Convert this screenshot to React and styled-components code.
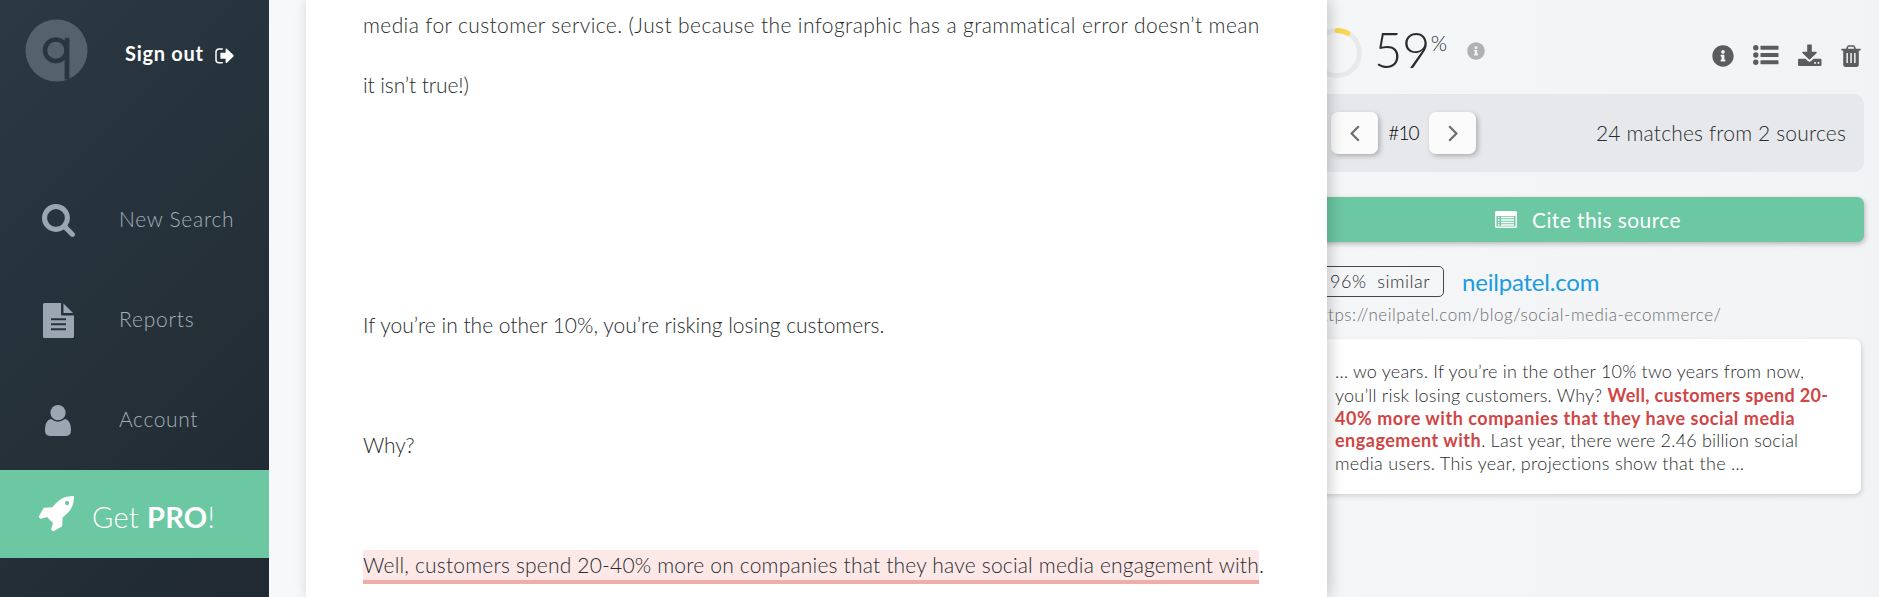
import styled, { createGlobalStyle } from "styled-components";
import { FaInfoCircle } from "react-icons/fa";

const paragraphs = [
  {
    lines: [
      {
        text: "media for customer service. (Just because the infographic has a grammatical error doesn’t mean",
        spacing: 0.39,
      },
      { text: "it isn’t true!)", spacing: -0.1 },
    ],
    after: 180,
  },
  {
    lines: [
      {
        text: "If you’re in the other 10%, you’re risking losing customers.",
        spacing: 0,
      },
    ],
    after: 60,
  },
  { lines: [{ text: "Why?", spacing: -0.2 }], after: 60 },
];

function Logo() {
  return (
    <svg width="63" height="63" viewBox="0 0 63 63">
      <circle cx="31.5" cy="31.5" r="31" fill="#56626b" />
      <circle cx="30.8" cy="31.3" r="10.8" fill="none" stroke="#29363f" strokeWidth="4.6" />
      <path d="M42 20.800V60.500" stroke="#29363f" strokeWidth="4.8" />
      <circle cx="42" cy="21" r="2.400" fill="#29363f" />
    </svg>
  );
}

function SignOutIcon() {
  return (
    <svg width="19" height="16" viewBox="0 0 19 16">
      <path
        d="M7.800 1H4A3 3 0 0 0 1 4v7.800a3 3 0 0 0 3 3h3.800"
        fill="none"
        stroke="#fff"
        strokeWidth="1.500"
      />
      <path
        d="M5.4 4.800h5.200V1.500c0-.9.800-1.200 1.400-.6l6.400 6.200q.6.700 0 1.300L12 14.700c-.6.600-1.400.3-1.400-.6v-3.300H5.4z"
        fill="#fff"
      />
    </svg>
  );
}

function SearchIcon() {
  return (
    <svg width="33" height="33" viewBox="64 128 1664 1664">
      <path
        fill="currentColor"
        d="M1216 832q0-185-131.5-316.5t-316.5-131.5-316.5 131.5-131.5 316.5 131.5 316.5 316.5 131.5 316.5-131.5 131.5-316.5zm512 832q0 52-38 90t-90 38q-54 0-90-38l-343-342q-179 124-399 124-143 0-273.5-55.5t-225-150-150-225-55.5-273.5 55.5-273.5 150-225 225-150 273.5-55.5 273.5 55.5 225 150 150 225 55.5 273.5q0 220-124 399l343 343q37 37 37 90z"
      />
    </svg>
  );
}

function ReportIcon() {
  return (
    <svg width="31" height="35" viewBox="0 0 31 35">
      <path
        fill="currentColor"
        fillRule="evenodd"
        d="M1.5 0H18v11.2q0 1.3 1.3 1.3H31v21q0 1.5-1.5 1.5h-28Q0 35 0 33.500v-32Q0 0 1.500 0zM8 15.200v2h15v-2zm0 5v2h15v-2zm0 5v2h15v-2z"
      />
      <path fill="currentColor" d="M20.5.5 30 10H20.500z" />
    </svg>
  );
}

function UserIcon() {
  return (
    <svg width="26" height="31" viewBox="0 0 26 31">
      <circle cx="13" cy="7.700" r="7.600" fill="currentColor" />
      <path
        fill="currentColor"
        d="M6.200 14Q13 19.300 19.800 14C24.500 14.500 26 20 26 25.600Q26 31 21 31H5Q0 31 0 25.600C0 20 1.500 14.500 6.200 14z"
      />
    </svg>
  );
}

function RocketIcon() {
  return (
    <svg width="36" height="36" viewBox="0 128 1664 1664">
      <path
        fill="currentColor"
        d="M1440 448q0-40-28-68t-68-28-68 28-28 68 28 68 68 28 68-28 28-68zm224-288q0 249-75.5 430.5t-253.5 360.5q-81 80-195 176l-20 379q-2 16-16 26l-384 224q-7 4-16 4-12 0-23-9l-64-64q-13-14-8-32l85-276-281-281-276 85q-3 1-9 1-14 0-23-9l-64-64q-17-19-5-39l224-384q10-14 26-16l379-20q96-114 176-195 188-187 358-258t431-71q14 0 24 9.5t10 22.5z"
      />
    </svg>
  );
}

function ListIcon() {
  return (
    <svg width="26" height="20" viewBox="0 0 26 20">
      {[2.8, 10, 17.2].map((y) => (
        <g key={y} fill="currentColor">
          <circle cx="2.800" cy={y} r="2.700" />
          <rect x="7.500" y={y - 2} width="18" height="4" rx="0.500" />
        </g>
      ))}
    </svg>
  );
}

function DownloadIcon() {
  return (
    <svg width="24" height="22" viewBox="0 0 24 22">
      <path
        fill="currentColor"
        d="M9.200.5h4.600v7.200h4.400q1 .3.400 1.200l-6.400 6.300q-.700.600-1.400 0L4.400 8.900q-.600-.900.400-1.200h4.400z"
      />
      <path
        fill="currentColor"
        fillRule="evenodd"
        d="M1.300 14.700h6.200l2.300 2.200q1.700 1.500 3.400 0l2.300-2.200h6.700q1.300 0 1.300 1.300v4.700q0 1.300-1.300 1.300H1.300Q0 22 0 20.700V16q0-1.300 1.300-1.300zM16.200 18v1.700h1.700V18zm3.400 0v1.700h1.700V18z"
      />
    </svg>
  );
}

function TrashIcon() {
  return (
    <svg width="20" height="22" viewBox="0 0 20 22">
      <path
        d="M.3 4.600h19.400M5.700 4.200l1-2.400q.300-.800 1.200-.800h4.200q.900 0 1.200.800l1 2.400"
        fill="none"
        stroke="currentColor"
        strokeWidth="1.600"
      />
      <path
        fill="currentColor"
        fillRule="evenodd"
        d="M2.200 5h15.600v14.300Q17.800 22 15.500 22h-11Q2.200 22 2.200 19.300zM5.400 8v10h1.500V8zm3.900 0v10h1.500V8zm3.800 0v10h1.500V8z"
      />
    </svg>
  );
}

function CiteIcon() {
  return (
    <svg width="22" height="17" viewBox="0 0 22 17">
      <path
        fill="currentColor"
        fillRule="evenodd"
        d="M1.500 0h19Q22 0 22 1.500v14q0 1.500-1.500 1.500h-19Q0 17 0 15.500v-14Q0 0 1.500 0zM1.500 5v10.500h19V5z"
      />
      <path
        d="M3 6.500h1.500M6 6.500h13M3 9h1.500M6 9h13M3 11.500h1.500M6 11.500h13M3 14h1.500M6 14h13"
        stroke="currentColor"
        strokeWidth="1.500"
      />
    </svg>
  );
}

function Chevron({ next }) {
  return (
    <svg width="10" height="17" viewBox="0 0 10 17">
      <path
        d={next ? "M1.200 1.200 8.400 8.500 1.200 15.800" : "M8.800 1.200 1.600 8.500 8.800 15.800"}
        fill="none"
        stroke="#6b6e70"
        strokeWidth="2.200"
      />
    </svg>
  );
}

export default function App() {
  return (
    <>
      <GlobalStyle />
      <Page>
        <Sidebar>
          <SidebarTop>
            <Logo />
            <SignOut>
              <span>Sign out</span>
              <SignOutIcon />
            </SignOut>
          </SidebarTop>
          <Nav>
            <NavItem $spacing={0.7}>
              <NavIcon>
                <SearchIcon />
              </NavIcon>
              <NavLabel>New Search</NavLabel>
            </NavItem>
            <NavItem $spacing={0.8}>
              <NavIcon>
                <ReportIcon />
              </NavIcon>
              <NavLabel>Reports</NavLabel>
            </NavItem>
            <NavItem $spacing={0.6}>
              <NavIcon>
                <UserIcon />
              </NavIcon>
              <NavLabel>Account</NavLabel>
            </NavItem>
          </Nav>
          <ProButton>
            <RocketIcon />
            <span>
              Get <b>PRO</b>!
            </span>
          </ProButton>
        </Sidebar>

        <Document>
          {paragraphs.map((paragraph) => (
            <Paragraph key={paragraph.lines[0].text} $after={paragraph.after}>
              {paragraph.lines.map((line) => (
                <Line key={line.text} $spacing={line.spacing}>
                  {line.text}
                </Line>
              ))}
            </Paragraph>
          ))}
          <Paragraph $after={0}>
            <Line $spacing={0.19}>
              <Highlight>
                Well, customers spend 20-40% more on companies that they have
                social media engagement with
              </Highlight>
              .
            </Line>
          </Paragraph>
        </Document>

        <Panel>
          <ScoreRow>
            <svg width="50" height="50" viewBox="0 0 50 50">
              <circle cx="25" cy="25" r="22.500" fill="none" stroke="#e8e9eb" strokeWidth="5" />
              <path
                d="M25 2.500A22.500 22.500 0 0 1 35.800 5.200"
                fill="none"
                stroke="#fbd54c"
                strokeWidth="5"
                strokeLinecap="round"
              />
            </svg>
            <Score>59</Score>
            <Percent>%</Percent>
            <ScoreInfo size={18} />
            <Tools>
              <FaInfoCircle size={22} />
              <ListIcon />
              <DownloadIcon />
              <TrashIcon />
            </Tools>
          </ScoreRow>
          <MatchBar>
            <PageButton>
              <Chevron />
            </PageButton>
            <MatchNumber>#10</MatchNumber>
            <PageButton>
              <Chevron next />
            </PageButton>
            <MatchTotal>24 matches from 2 sources</MatchTotal>
          </MatchBar>
          <CiteButton>
            <CiteIcon />
            <span>Cite this source</span>
          </CiteButton>
          <SourceRow>
            <Similar>96%&nbsp; similar</Similar>
            <SourceName>neilpatel.com</SourceName>
          </SourceRow>
          <SourceUrl>https://neilpatel.com/blog/social-media-ecommerce/</SourceUrl>
          <Snippet>
            <SnippetLine $height={24}>
              <Text $spacing={0.22}>
                … wo years. If you’re in the other 10% two years from now,
              </Text>
            </SnippetLine>
            <SnippetLine $height={23}>
              <Text $spacing={0.22}>you’ll risk losing customers. Why? </Text>
              <Match $spacing={0.34}>Well, customers spend 20-</Match>
            </SnippetLine>
            <SnippetLine $height={22}>
              <Match $spacing={0.54}>
                40% more with companies that they have social media
              </Match>
            </SnippetLine>
            <SnippetLine $height={23}>
              <Match $spacing={0.5}>engagement with</Match>
              <Text $spacing={0.19}>
                . Last year, there were 2.46 billion social
              </Text>
            </SnippetLine>
            <SnippetLine $height={24}>
              <Text $spacing={0.31}>
                media users. This year, projections show that the …
              </Text>
            </SnippetLine>
          </Snippet>
        </Panel>
      </Page>
    </>
  );
}

const GlobalStyle = createGlobalStyle`
  * {
    box-sizing: border-box;
  }
  body {
    margin: 0;
    font-family: Lato, "Open Sans", sans-serif;
    font-weight: 300;
    color: #2a2c2e;
    overflow: hidden;
  }
  svg {
    display: block;
    flex: none;
  }
`;
const Page = styled.div`
  display: flex;
  width: 1879px;
  height: 597px;
  overflow: hidden;
  background-color: #f7f8fa;
`;
const Sidebar = styled.aside`
  flex: none;
  width: 269px;
  background: linear-gradient(135deg, #2b3942 0%, #202931 100%);
`;
const SidebarTop = styled.div`
  display: flex;
  align-items: flex-start;
  height: 170px;
  padding: 19px 0 0 25px;
`;
const SignOut = styled.a`
  display: flex;
  align-items: center;
  gap: 11px;
  margin: 19px 0 0 37px;
  font-size: 20px;
  line-height: 30px;
  font-weight: 700;
  letter-spacing: 0.7px;
  color: #fff;
  white-space: nowrap;

  svg {
    margin-top: 5px;
  }
`;
const Nav = styled.nav`
  display: flex;
  flex-direction: column;
`;
const NavItem = styled.a`
  display: flex;
  align-items: center;
  height: 100px;
  padding-left: 28px;
  font-size: 21px;
  letter-spacing: ${(props) => props.$spacing}px;
  color: #a3b0ba;
`;
const NavIcon = styled.span`
  display: flex;
  justify-content: center;
  width: 60px;
  margin-right: 31px;
  color: #9ba6b2;
`;
const NavLabel = styled.span`
  padding-bottom: 3px;
`;
const ProButton = styled.a`
  display: flex;
  align-items: center;
  gap: 18px;
  height: 88px;
  padding-left: 38px;
  background-color: #6cc7a3;
  font-size: 29px;
  letter-spacing: 0.25px;
  color: #fff;

  span {
    padding-top: 5px;
  }
  b {
    font-weight: 700;
  }
`;
const Document = styled.main`
  position: relative;
  z-index: 1;
  flex: none;
  width: 1021px;
  margin-left: 37px;
  padding-left: 57px;
  background-color: #fff;
  box-shadow: 3px 0 14px rgba(0, 0, 0, 0.2);
`;
const Paragraph = styled.p`
  margin: 0 0 ${(props) => props.$after}px;

  &:first-child {
    margin-top: -5px;
  }
`;
const Line = styled.span`
  display: block;
  font-size: 21px;
  line-height: 60px;
  letter-spacing: ${(props) => props.$spacing}px;
  white-space: nowrap;
`;
const Highlight = styled.mark`
  padding: 2px 0 3px;
  border-bottom: 4px solid #efaca8;
  border-radius: 2px 2px 0 0;
  background-color: #fde8e8;
  color: inherit;
`;
const Panel = styled.section`
  flex: none;
  width: 567px;
  margin-left: -15px;
  padding-right: 15px;
  background: linear-gradient(90deg, #f5f6f8, #f1f3f5);
`;
const ScoreRow = styled.div`
  display: flex;
  align-items: center;
  height: 94px;
  padding: 11px 3px 0 0;
`;
const Score = styled.span`
  margin: -7px 0 0 12px;
  font-size: 49px;
  line-height: 60px;
  letter-spacing: -0.5px;
`;
const Percent = styled.span`
  margin: -21px 20px 0 1px;
  font-size: 21px;
`;
const ScoreInfo = styled(FaInfoCircle)`
  margin-top: -4px;
  color: #b1b1b1;
`;
const Tools = styled.div`
  display: flex;
  align-items: center;
  gap: 19px;
  margin: 4px 0 0 auto;
  color: #5b5c5e;

  svg:first-child {
    margin-top: 2px;
  }
  svg:last-child {
    margin-top: 2px;
  }
`;
const MatchBar = styled.div`
  display: flex;
  align-items: center;
  height: 78px;
  padding: 0 18px 0 19px;
  border-radius: 0 10px 10px 0;
  background-color: #e7e8ec;
`;
const PageButton = styled.button`
  display: flex;
  align-items: center;
  justify-content: center;
  width: 47px;
  height: 42px;
  padding: 0;
  border: 0;
  border-radius: 7px;
  background-color: #fbfbfb;
  box-shadow: 2px 2px 5px rgba(0, 0, 0, 0.25);
`;
const MatchNumber = styled.span`
  width: 51px;
  padding-bottom: 1px;
  text-align: center;
  font-size: 19px;
  letter-spacing: -0.8px;
  color: #000;
`;
const MatchTotal = styled.span`
  margin-left: auto;
  padding-bottom: 2px;
  font-size: 21px;
  letter-spacing: 0.16px;
`;
const CiteButton = styled.button`
  display: flex;
  align-items: center;
  justify-content: center;
  gap: 15px;
  width: 100%;
  height: 45px;
  margin-top: 25px;
  padding: 0;
  border: 0;
  border-radius: 0 7px 7px 0;
  background-color: #6cc7a3;
  box-shadow: 1px 2px 5px rgba(0, 0, 0, 0.25);
  font-family: inherit;
  font-size: 21px;
  letter-spacing: 0.4px;
  color: #fff;
`;
const SourceRow = styled.div`
  display: flex;
  align-items: center;
  height: 31px;
  margin-top: 24px;
`;
const Similar = styled.span`
  width: 132px;
  height: 31px;
  padding-right: 13px;
  border: 1px solid #46484a;
  border-radius: 5px;
  text-align: right;
  font-size: 18px;
  line-height: 29px;
  letter-spacing: 0.5px;
  white-space: nowrap;
`;
const SourceName = styled.a`
  margin-left: 18px;
  padding-bottom: 1px;
  font-size: 24px;
  font-weight: 400;
  letter-spacing: -0.2px;
  color: #1b9be0;
`;
const SourceUrl = styled.div`
  height: 42px;
  font-size: 17px;
  line-height: 36px;
  letter-spacing: 0.52px;
  color: #6c6e70;
`;
const Snippet = styled.div`
  width: 549px;
  height: 155px;
  padding: 21px 0 0 23px;
  border-radius: 7px;
  background-color: #fff;
  box-shadow: 1px 2px 5px rgba(0, 0, 0, 0.15);
`;
const SnippetLine = styled.div`
  height: ${(props) => props.$height}px;
  font-size: 18px;
  line-height: 23px;
  white-space: pre;
`;
const Text = styled.span`
  letter-spacing: ${(props) => props.$spacing}px;
`;
const Match = styled.b`
  font-weight: 700;
  letter-spacing: ${(props) => props.$spacing}px;
  color: #d04545;
`;
